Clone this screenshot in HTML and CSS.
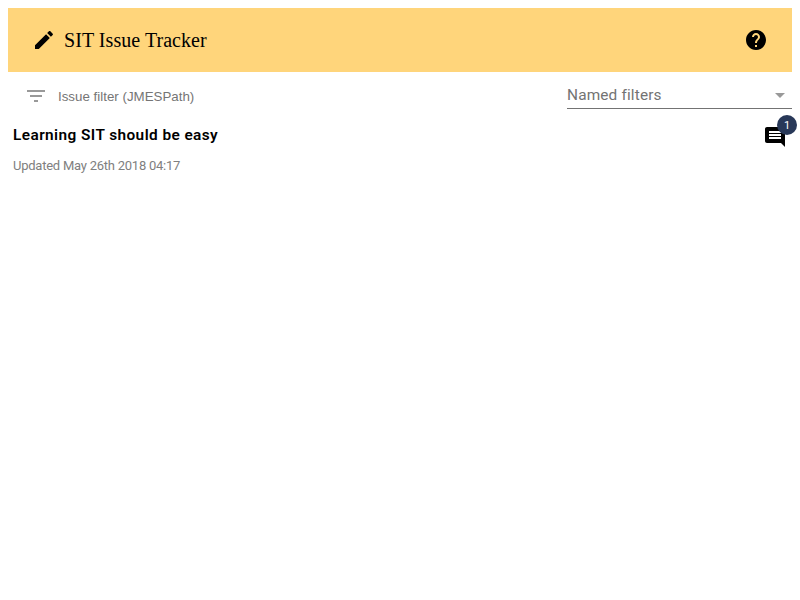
FILE: index.html
```html
<!DOCTYPE html>
<html lang="en">
<head>
<meta charset="utf-8">
<title>SIT Issue Tracker</title>
<link rel="stylesheet" href="styles.css">
</head>
<body>
<header class="toolbar">
  <svg class="icon" viewBox="0 0 24 24"><path d="M3 17.25V21h3.75L17.81 9.94l-3.75-3.75L3 17.25zM20.71 7.04c.39-.39.39-1.02 0-1.41l-2.34-2.34c-.39-.39-1.02-.39-1.41 0l-1.83 1.83 3.75 3.75 1.83-1.83z"/></svg>
  <div class="title">SIT Issue Tracker</div>
  <svg class="icon" viewBox="0 0 24 24"><path d="M12 2C6.48 2 2 6.48 2 12s4.480 10 10 10 10-4.480 10-10S17.520 2 12 2zm1 17h-2v-2h2v2zm2.070-7.750l-.9.920C13.450 12.900 13 13.500 13 15h-2v-.5c0-1.100.45-2.100 1.170-2.830l1.240-1.260c.37-.36.59-.86.59-1.410 0-1.100-.9-2-2-2s-2 .9-2 2H8c0-2.210 1.790-4 4-4s4 1.790 4 4c0 .88-.36 1.680-.93 2.250z"/></svg>
</header>
<div class="filters">
  <svg class="icon filter-icon" viewBox="0 0 24 24"><path d="M10 18h4v-2h-4v2zM3 6v2h18V6H3zm3 7h12v-2H6v2z"/></svg>
  <input class="query" type="text" placeholder="Issue filter (JMESPath)">
  <div class="named"><span>Named filters</span><svg class="icon arrow" viewBox="0 0 24 24"><path d="M7 10l5 5 5-5z"/></svg></div>
</div>
<main class="issue">
  <div>
    <div class="summary">Learning SIT should be easy</div>
    <div class="updated">Updated May 26th 2018 04:17</div>
  </div>
  <div class="comments">
    <svg class="icon" viewBox="0 0 24 24"><path d="M21.990 4c0-1.100-.89-2-1.990-2H4c-1.100 0-2 .9-2 2v12c0 1.100.9 2 2 2h14l4 4-.01-18zM18 14H6v-2h12v2zm0-3H6V9h12v2zm0-3H6V6h12v2z"/></svg>
    <span class="badge">1</span>
  </div>
</main>
</body>
</html>
```
FILE: styles.css
```css
body { margin: 0; padding: 8px; background: #fff; color: #000; font-family: Roboto, sans-serif; }
.icon { display: block; width: 24px; height: 24px; flex: none; fill: currentColor; }
.toolbar { display: flex; align-items: center; height: 64px; padding: 0 24px; background: #ffd57b; font-family: "Liberation Serif", serif; font-size: 20px; }
.title { flex: 1; margin-left: 8px; letter-spacing: 0.05px; }
.filters { display: flex; height: 49px; }
.filter-icon { margin: 12px 10px 0 16px; color: #999; }
.query { flex: 1; min-width: 0; height: 17px; margin: 16px 12px 0 0; padding: 0; border: 0; outline: 0; background: transparent; font: 13.333px "Liberation Sans", sans-serif; }
.query::placeholder { color: #757575; }
.named { box-sizing: border-box; display: flex; justify-content: space-between; width: 225px; height: 37px; padding-top: 11px; border-bottom: 1px solid #737373; color: #737373; font-size: 15.4px; line-height: 24px; letter-spacing: 0.15px; }
.arrow { color: #999; }
.issue { display: flex; justify-content: space-between; padding: 0 5px; }
.summary { font-size: 15.4px; font-weight: 600; line-height: 28px; letter-spacing: 0.42px; }
.updated { margin-top: 7px; font-size: 13px; line-height: 20px; color: #808080; letter-spacing: -0.24px; }
.comments { position: relative; height: 24px; margin-top: 4px; }
.badge { position: absolute; top: -10px; right: -10px; width: 20px; height: 20px; border-radius: 50%; background: #283858; color: #fff; font-size: 11px; line-height: 22px; text-align: center; }
```
